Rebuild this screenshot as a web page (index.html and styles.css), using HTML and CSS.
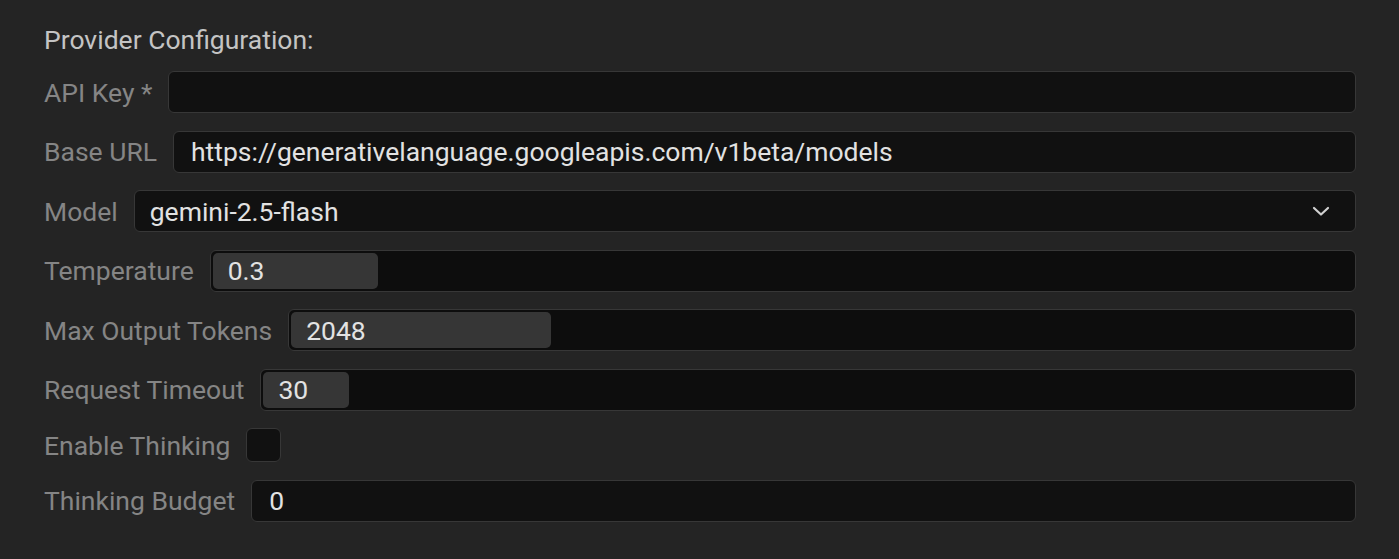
FILE: index.html
```html
<!DOCTYPE html>
<html>
<head>
<meta charset="utf-8">
<link rel="stylesheet" href="styles.css">
</head>
<body>
<div class="panel">
  <div class="title">Provider Configuration:</div>
  <div class="form">
    <div class="row">
      <span class="label">API Key *</span>
      <div class="field"></div>
    </div>
    <div class="row">
      <span class="label">Base URL</span>
      <div class="field"><span class="value">https://generativelanguage.googleapis.com/v1beta/models</span></div>
    </div>
    <div class="row">
      <span class="label">Model</span>
      <div class="field select"><span class="value model">gemini-2.5-flash</span>
        <svg class="chev" width="18" height="12" viewBox="0 0 18 12"><path d="M2 3 L9 9.5 L16 3" fill="none" stroke="#d0d0d0" stroke-width="2.2" stroke-linecap="round" stroke-linejoin="round"/></svg>
      </div>
    </div>
    <div class="row">
      <span class="label">Temperature</span>
      <div class="field slider"><div class="fill" style="width:165px"><span class="value">0.3</span></div></div>
    </div>
    <div class="row">
      <span class="label">Max Output Tokens</span>
      <div class="field slider"><div class="fill" style="width:260px"><span class="value">2048</span></div></div>
    </div>
    <div class="row">
      <span class="label">Request Timeout</span>
      <div class="field slider"><div class="fill" style="width:86px"><span class="value">30</span></div></div>
    </div>
    <div class="row check-row">
      <span class="label">Enable Thinking</span>
      <div class="checkbox"></div>
    </div>
    <div class="row">
      <span class="label">Thinking Budget</span>
      <div class="field"><span class="value">0</span></div>
    </div>
  </div>
</div>
</body>
</html>
```
FILE: styles.css
```css
html, body {
  margin: 0;
  padding: 0;
  background: #242424;
  height: 100%;
}
body {
  font-family: Roboto, "Liberation Sans", sans-serif;
  overflow: hidden;
}
.panel {
  padding: 25px 43px 0 44px;
}
.title {
  color: #c4c4c4;
  font-size: 26.5px;
  line-height: 30px;
  height: 30px;
  margin-bottom: 16px;
}
.form {
  display: flex;
  flex-direction: column;
  gap: 17.5px;
}
.row {
  display: flex;
  align-items: center;
  height: 42px;
  gap: 16px;
}
.check-row {
  height: 34px;
}
.label {
  color: #858585;
  font-size: 26.5px;
  white-space: nowrap;
  flex: none;
}
.field {
  flex: 1;
  height: 42px;
  box-sizing: border-box;
  background: #111111;
  border: 1.5px solid #373737;
  border-radius: 6px;
  display: flex;
  align-items: center;
  padding: 0 17px;
}
.value {
  color: #e2e2e2;
  font-size: 26.5px;
  white-space: nowrap;
}
.model {
  margin-left: -2px;
}
.select {
  justify-content: space-between;
}
.chev {
  margin-right: 8px;
}
.slider {
  padding: 2px;
  background: #0d0d0d;
  align-items: stretch;
}
.fill {
  background: #363636;
  border-radius: 5px;
  display: flex;
  align-items: center;
  padding-left: 15px;
  box-sizing: border-box;
}
.checkbox {
  width: 35px;
  height: 34px;
  box-sizing: border-box;
  background: #111111;
  border: 1.5px solid #373737;
  border-radius: 6px;
}
```
